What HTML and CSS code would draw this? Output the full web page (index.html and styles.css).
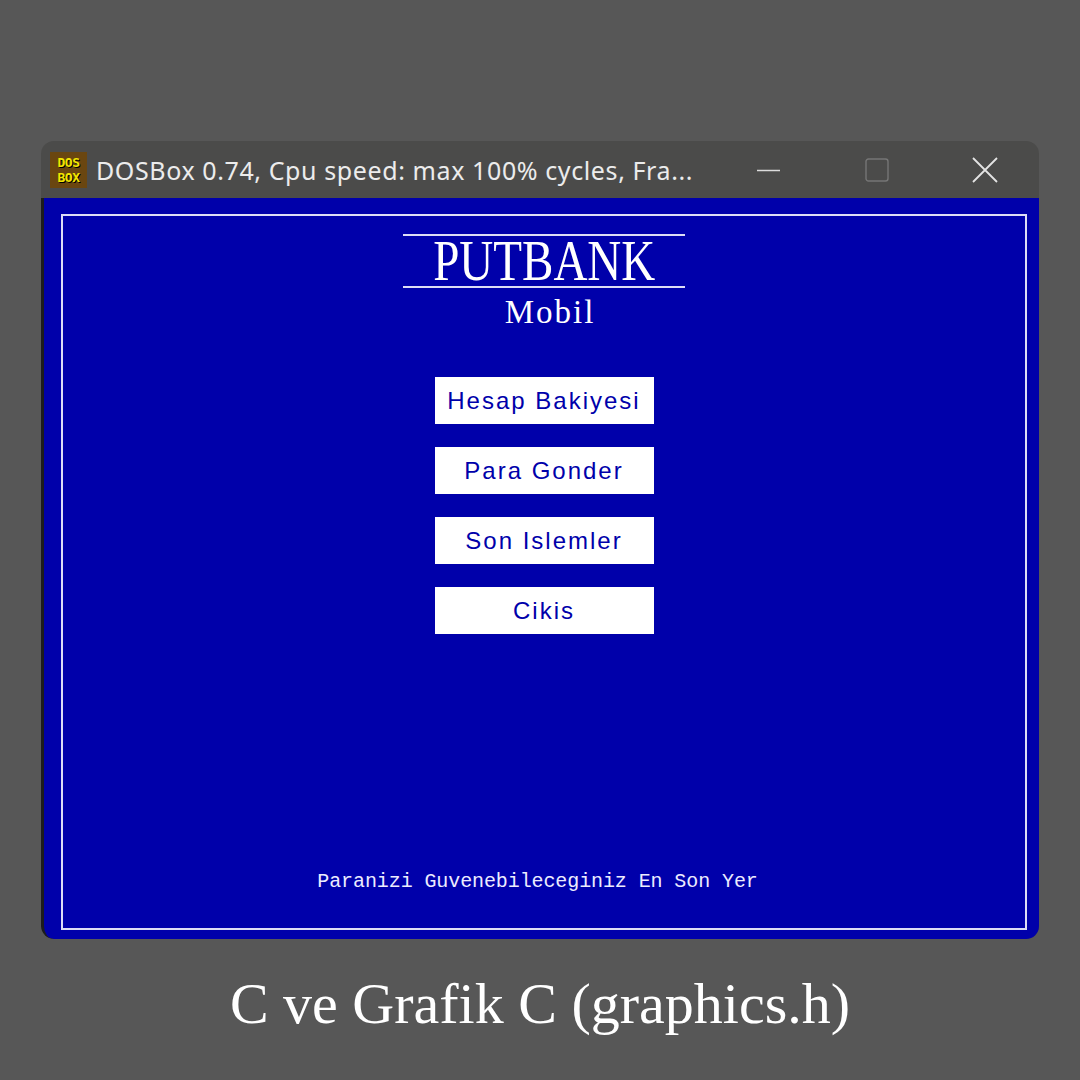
FILE: index.html
```html
<!DOCTYPE html>
<html lang="tr">
<head>
<meta charset="utf-8">
<title>DOSBox - PUTBANK</title>
<link rel="stylesheet" href="styles.css">
</head>
<body>
<div class="stage">
  <div class="window">
    <div class="titlebar">
      <div class="app-icon"><span>DOS</span><span>BOX</span></div>
      <div class="title-text">DOSBox 0.74, Cpu speed: max 100% cycles, Fra...</div>
      <div class="controls">
        <div class="ctrl"><svg width="24" height="24" viewBox="0 0 24 24"><line x1="0" y1="12.5" x2="23" y2="12.5" stroke="#dcdcdc" stroke-width="1.4"/></svg></div>
        <div class="ctrl"><svg width="24" height="24" viewBox="0 0 24 24"><rect x="1" y="1" width="22" height="22" rx="2.5" fill="none" stroke="#767676" stroke-width="1.4"/></svg></div>
        <div class="ctrl"><svg width="26" height="26" viewBox="0 0 26 26"><path d="M1 1 L25 25 M25 1 L1 25" stroke="#e4e4e4" stroke-width="1.8" fill="none"/></svg></div>
      </div>
    </div>
    <div class="screen">
      <div class="frame">
        <div class="brand">
          <div class="brand-name"><span>PUTBANK</span></div>
          <div class="brand-sub">Mobil</div>
        </div>
        <div class="menu">
          <div class="btn">Hesap Bakiyesi</div>
          <div class="btn">Para Gonder</div>
          <div class="btn">Son Islemler</div>
          <div class="btn">Cikis</div>
        </div>
        <div class="slogan">Paranizi Guvenebileceginiz En Son Yer</div>
      </div>
    </div>
  </div>
  <div class="caption">C ve Grafik C (graphics.h)</div>
</div>
</body>
</html>
```
FILE: styles.css
```css
html, body {
  margin: 0;
  padding: 0;
}
body {
  width: 1080px;
  height: 1080px;
  background: #575757;
  overflow: hidden;
}
.stage {
  display: flex;
  flex-direction: column;
  align-items: center;
  padding-top: 141px;
}
.window {
  width: 998px;
  height: 798px;
  border-radius: 13px;
  overflow: hidden;
  background: #4b4b4a;
  display: flex;
  flex-direction: column;
}
.titlebar {
  height: 57px;
  flex: none;
  display: flex;
  align-items: center;
  padding-left: 9px;
}
.app-icon {
  width: 37px;
  height: 36px;
  background: #6a4610;
  display: flex;
  flex-direction: column;
  align-items: center;
  justify-content: center;
  font-family: "DejaVu Sans Mono", monospace;
  font-weight: bold;
  font-size: 13px;
  line-height: 15px;
  color: #f2e600;
  letter-spacing: -0.5px;
  text-shadow: 1px 1px 0 #000;
}
.title-text {
  margin-left: 9px;
  font-family: "Noto Sans", "Open Sans", sans-serif;
  font-size: 25px;
  letter-spacing: 0.6px;
  color: #ececec;
  white-space: nowrap;
  flex: 1;
}
.controls {
  display: flex;
  align-items: center;
}
.ctrl {
  width: 108px;
  display: flex;
  justify-content: center;
}
.screen {
  flex: 1;
  background: #0000aa;
  border-left: 3px solid #1c1c1c;
  border-bottom-left-radius: 13px;
  padding: 16px 12px 9px 17px;
  display: flex;
}
.frame {
  flex: 1;
  border: 2px solid #dcdcf6;
  display: flex;
  flex-direction: column;
  align-items: center;
}
.brand {
  margin-top: 18px;
  width: 282px;
  display: flex;
  flex-direction: column;
  align-items: center;
}
.brand-name {
  width: 100%;
  height: 50px;
  border-top: 2px solid #dcdcf6;
  border-bottom: 2px solid #dcdcf6;
  text-align: center;
  font-family: "Liberation Serif", serif;
  font-size: 56px;
  line-height: 50px;
  color: #ffffff;
}
.brand-name span {
  display: inline-block;
  transform: scaleX(0.84);
}
.brand-sub {
  margin-top: 4px;
  margin-left: 12px;
  font-family: "Liberation Serif", serif;
  font-size: 33px;
  line-height: 40px;
  letter-spacing: 2px;
  color: #ffffff;
}
.menu {
  margin-top: 45px;
  display: flex;
  flex-direction: column;
  gap: 23px;
}
.btn {
  width: 219px;
  height: 47px;
  background: #ffffff;
  color: #0000aa;
  display: flex;
  align-items: center;
  justify-content: center;
  font-family: "Liberation Sans", sans-serif;
  font-size: 24px;
  letter-spacing: 2px;
}
.slogan {
  margin-top: auto;
  margin-bottom: 36px;
  font-family: "Liberation Mono", monospace;
  font-size: 20px;
  line-height: 20px;
  letter-spacing: -0.1px;
  color: #ececff;
  white-space: nowrap;
  margin-right: 13px;
}
.caption {
  margin-top: 30px;
  font-family: "Liberation Serif", serif;
  font-size: 58px;
  line-height: 70px;
  color: #ffffff;
}
```
